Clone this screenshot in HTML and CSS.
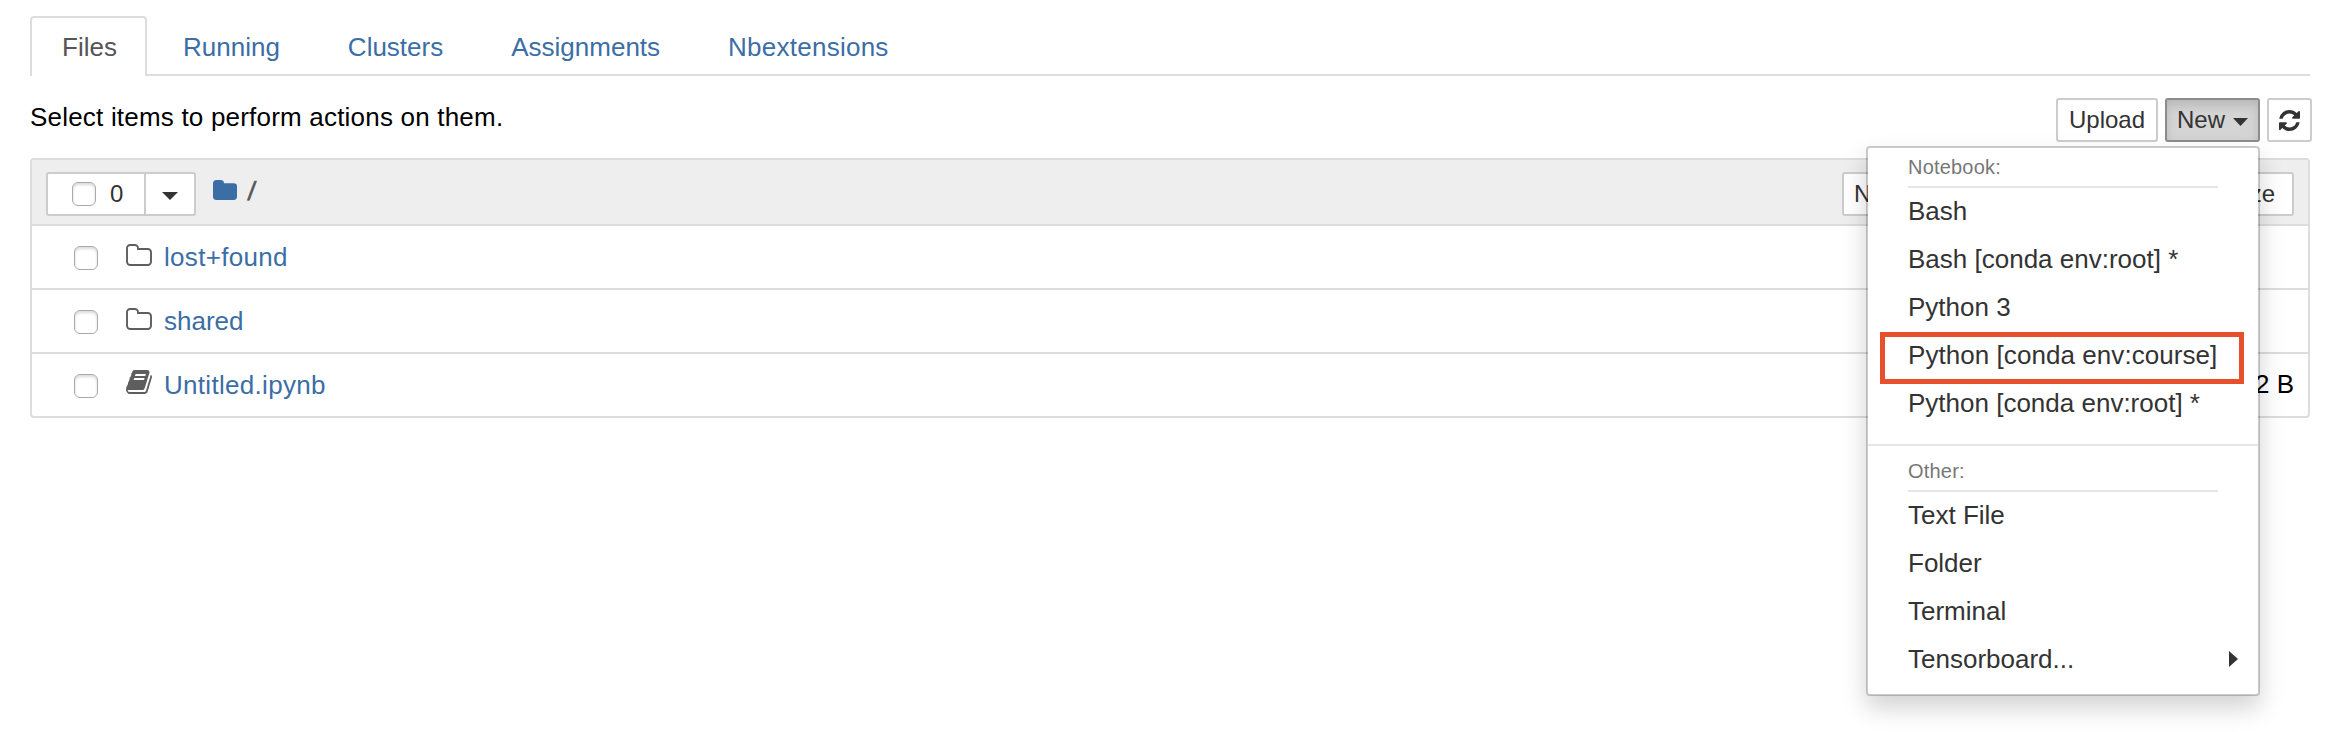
FILE: index.html
```html
<!DOCTYPE html>
<html lang="en">
<head>
<meta charset="utf-8">
<title>Home</title>
<link rel="stylesheet" href="styles.css">
</head>
<body>
<svg class="defs" aria-hidden="true">
  <symbol id="folder-o" viewBox="0 0 26 22"><path d="M1 4.200A3.200 3.200 0 0 1 4.200 1h4.600A3.200 3.200 0 0 1 12 4.200V5h9.800A3.200 3.200 0 0 1 25 8.200v9.600A3.200 3.200 0 0 1 21.800 21H4.200A3.200 3.200 0 0 1 1 17.800z" fill="none" stroke="currentColor" stroke-width="1.900"/></symbol>
</svg>
<ul class="tabs">
  <li class="tab active">Files</li>
  <li class="tab">Running</li>
  <li class="tab">Clusters</li>
  <li class="tab">Assignments</li>
  <li class="tab wide">Nbextensions</li>
</ul>
<div class="toolbar">
  <div class="hint">Select items to perform actions on them.</div>
  <div class="actions">
    <button class="btn upload">Upload</button>
    <div class="dropdown">
      <button class="btn new">New <i class="caret"></i></button>
      <div class="menu">
        <div class="heading">Notebook:</div>
        <div class="item">Bash</div>
        <div class="item">Bash [conda env:root] *</div>
        <div class="item">Python 3</div>
        <div class="item marked">Python [conda env:course]</div>
        <div class="item">Python [conda env:root] *</div>
        <div class="divider"></div>
        <div class="heading">Other:</div>
        <div class="item">Text File</div>
        <div class="item">Folder</div>
        <div class="item">Terminal</div>
        <div class="item sub">Tensorboard...<i class="caret-right"></i></div>
      </div>
    </div>
    <button class="btn refresh" aria-label="Refresh"><svg width="21" height="21" viewBox="0 0 1536 1536"><path fill="currentColor" d="M1511 928q0 5-1 7-64 268-268 434.500T764 1536q-146 0-282.500-55T238 1324l-129 129q-19 19-45 19t-45-19-19-45V960q0-26 19-45t45-19h448q26 0 45 19t19 45-19 45l-137 137q71 66 161 102t187 36q134 0 250-65t186-179q11-17 53-117 8-23 30-23h192q13 0 22.500 9.500t9.500 22.500zm25-800v448q0 26-19 45t-45 19h-448q-26 0-45-19t-19-45 19-45l138-138Q969 256 768 256q-134 0-250 65T332 500q-11 17-53 117-8 23-30 23H50q-13 0-22.500-9.500T18 608v-7q65-268 270-434.500T768 0q146 0 284 55.500T1297 212l130-129q19-19 45-19t45 19 19 45z"/></svg></button>
  </div>
</div>
<div class="list">
  <div class="list-head">
    <div class="select">
      <span class="select-all"><i class="check"></i>0</span>
      <span class="select-more"><i class="caret"></i></span>
    </div>
    <svg class="crumb-icon" width="24" height="20" viewBox="0 0 24 20"><path fill="currentColor" d="M0 3.500A3.500 3.500 0 0 1 3.500 0h4A3.500 3.500 0 0 1 11 3.300h9.700A3.300 3.300 0 0 1 24 6.600v10a3.400 3.400 0 0 1-3.400 3.400H3.400A3.400 3.400 0 0 1 0 16.600z"/></svg>
    <span class="slash">/</span>
    <div class="sorts">
      <span class="sort name">Name</span><span class="sort size">File size</span>
    </div>
  </div>
  <div class="row"><i class="check"></i><svg class="icon" width="26" height="22"><use href="#folder-o"/></svg><a>lost+found</a></div>
  <div class="row"><i class="check"></i><svg class="icon" width="26" height="22"><use href="#folder-o"/></svg><a class="tight">shared</a></div>
  <div class="row"><i class="check"></i><svg class="icon book" width="26" height="24" viewBox="0 0 1664 1536"><path fill="currentColor" d="M1639 350q40 57 18 129l-275 906q-19 64-76.500 107.500T1183 1536H260q-77 0-148.500-53.500T12 1351q-24-67-2-127 0-4 3-27t4-37q1-8-3-21.500t-3-19.500q2-11 8-21t16.500-23.500T52 1051q23-38 45-91.500t30-91.500q3-10 .5-30t-.5-28q3-11 17-28t17-23q21-36 42-92t25-90q1-9-2.500-32t.5-28q4-13 22-30.500t22-22.500q19-26 42.500-84.500T340 283q1-8-3-25.500t-2-26.500q2-8 9-18t18-23 17-21q8-12 16.500-30.500t15-35 16-36 19.500-32T469.500 12t36-11.500T553 6l-1 3q38-9 51-9h761q74 0 114 56t18 130l-274 906q-36 119-71.500 153.500T1022 1280H153q-27 0-38 15-11 16-1 43 24 70 144 70h923q29 0 56-15.500t35-41.500l300-987q7-22 5-57 38 15 59 43zm-1064 2q-4 13 2 22.500t20 9.500h608q13 0 25.500-9.500T1247 352l21-64q4-13-2-22.500t-20-9.500H638q-13 0-25.500 9.500T596 288zm-83 256q-4 13 2 22.500t20 9.500h608q13 0 25.500-9.500T1164 608l21-64q4-13-2-22.500t-20-9.500H555q-13 0-25.500 9.500T513 544z"/></svg><a>Untitled.ipynb</a><span class="bytes">72 B</span></div>
</div>
</body>
</html>
```
FILE: styles.css
```css
*, *::after { box-sizing: border-box; }
body {
  margin: 0;
  padding: 16px 42px 0 30px;
  height: 732px;
  overflow: hidden;
  background: #fff;
  color: #000;
  font: 26px/38px "Liberation Sans", Arial, sans-serif;
}
.defs { position: absolute; width: 0; height: 0; }
.tabs {
  display: flex;
  gap: 4px;
  height: 60px;
  margin: 0;
  padding: 0;
  list-style: none;
  border-bottom: 2px solid #ddd;
}
.tab {
  height: 60px;
  padding: 10px 30px 0;
  border: 2px solid transparent;
  border-bottom: 0;
  border-radius: 4px 4px 0 0;
  color: #3b6ea5;
}
.tab.active { width: 117px; color: #555; background: #fff; border-color: #ddd; }
.tab.wide { letter-spacing: .25px; }
.toolbar { display: flex; justify-content: space-between; height: 82px; padding-top: 22px; margin-right: -2px; }
.hint { letter-spacing: .2px; }
.actions { display: flex; gap: 7px; }
.btn {
  height: 44px;
  padding: 0 10px;
  border: 2px solid #ccc;
  border-radius: 3px;
  background: #fff;
  color: #333;
  font: 24px/40px "Liberation Sans", Arial, sans-serif;
  white-space: nowrap;
}
.upload { width: 102px; }
.new {
  display: flex;
  align-items: center;
  gap: 8px;
  width: 95px;
  background: #d4d4d4;
  border-color: #8c8c8c;
  box-shadow: inset 0 6px 10px rgba(0, 0, 0, .125);
}
.refresh { display: flex; align-items: center; justify-content: center; width: 45px; }
.caret { width: 16px; height: 8px; margin-top: 4px; background: #333; clip-path: polygon(0 0, 100% 0, 50% 100%); }
.dropdown { position: relative; }
.menu {
  position: absolute;
  top: 48px;
  right: 0;
  z-index: 2;
  width: 394px;
  height: 550px;
  padding: 10px 0;
  background: #fff;
  background-clip: padding-box;
  border: 2px solid rgba(0, 0, 0, .2);
  border-radius: 4px;
  box-shadow: 0 12px 24px rgba(0, 0, 0, .175);
  color: #333;
}
.heading {
  height: 30px;
  margin: 0 40px;
  font-size: 20px;
  line-height: 18px;
  letter-spacing: .2px;
  color: #777;
  border-bottom: 2px solid #e5e5e5;
}
.item { height: 48px; padding: 4px 40px 6px; white-space: nowrap; }
.marked { position: relative; letter-spacing: .06px; }
.marked::after {
  content: "";
  position: absolute;
  left: 12px;
  top: 0;
  width: 364px;
  height: 52px;
  border: 5px solid #e8502d;
}
.divider { height: 2px; margin: 16px 0; background: #e5e5e5; }
.sub { display: flex; justify-content: space-between; align-items: center; padding-right: 20px; }
.caret-right { width: 9px; height: 16px; background: #333; clip-path: polygon(0 0, 100% 50%, 0 100%); }
.list { border: 2px solid #ddd; border-radius: 4px; }
.list-head { display: flex; height: 64px; padding: 12px 14px 8px; background: #eee; }
.select { display: flex; width: 150px; height: 44px; background: #fff; border: 2px solid #ccc; border-radius: 3px; color: #333; font-size: 24px; }
.select-all { display: flex; align-items: center; gap: 14px; width: 98px; padding-left: 24px; border-right: 2px solid #ccc; }
.select-more { flex: 1; display: flex; align-items: center; justify-content: center; }
.check { width: 24px; height: 24px; border: 1px solid #aaa; border-radius: 6px; background: #fff; box-shadow: inset 0 2px 3px rgba(0, 0, 0, .15); }
.crumb-icon { margin: 8px 0 0 17px; color: #3b6ea5; }
.slash { margin-left: 11px; color: #555; -webkit-text-stroke: .6px #555; transform: skewX(-6deg); }
.sorts { display: flex; justify-content: space-between; width: 452px; margin-left: auto; }
.sort { height: 44px; padding: 0 10px; border: 2px solid #ccc; border-radius: 3px; background: #fff; color: #333; font-size: 24px; line-height: 40px; }
.size { padding-right: 17px; }
.row { display: flex; height: 64px; padding: 12px 14px 0 42px; border-top: 2px solid #ddd; }
.row .check { margin-top: 8px; }
.icon { margin: 6px 12px 0 28px; color: #5e5e5e; }
.icon.book { margin-top: 4px; }
.row a { color: #3b6ea5; letter-spacing: .3px; }
.row .tight { letter-spacing: 0; }
.bytes { margin-left: auto; margin-top: -1px; }
```
